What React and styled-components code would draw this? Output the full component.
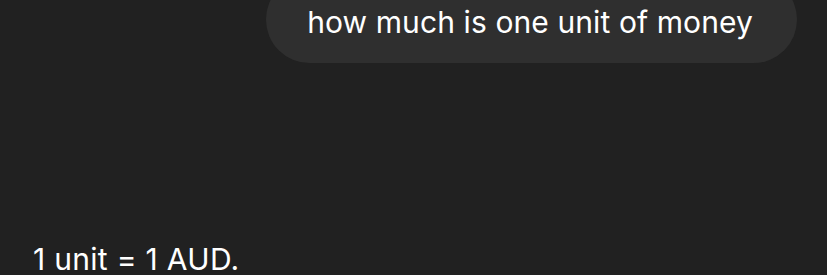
import React from "react";
import styled, { createGlobalStyle } from "styled-components";

const GlobalStyle = createGlobalStyle`
*{
  margin: 0;
  padding: 0;
  box-sizing: border-box;
}
body{
  background-color: #212121;
  font-family: Inter, "Liberation Sans", sans-serif;
  color: #fff;
}
`

const Page = styled.div`
width: 827px;
height: 275px;
overflow: hidden;
display: flex;
flex-direction: column;
`

const UserRow = styled.div`
display: flex;
justify-content: flex-end;
padding-right: 30px;
margin-top: -24px;
`

const Bubble = styled.div`
background-color: #2f2f2f;
border-radius: 44px;
padding: 24px 44px 19px 41px;
font-size: 30px;
line-height: 44px;
letter-spacing: 0.1px;
`

const Answer = styled.p`
margin-top: auto;
margin-bottom: -4px;
padding-left: 33px;
font-size: 30px;
line-height: 40px;
letter-spacing: 0.3px;
`

export default function App() {
  return (
    <Page>
      <GlobalStyle />
      <UserRow>
        <Bubble>how much is one unit of money</Bubble>
      </UserRow>
      <Answer>1 unit = 1 AUD.</Answer>
    </Page>
  );
}
